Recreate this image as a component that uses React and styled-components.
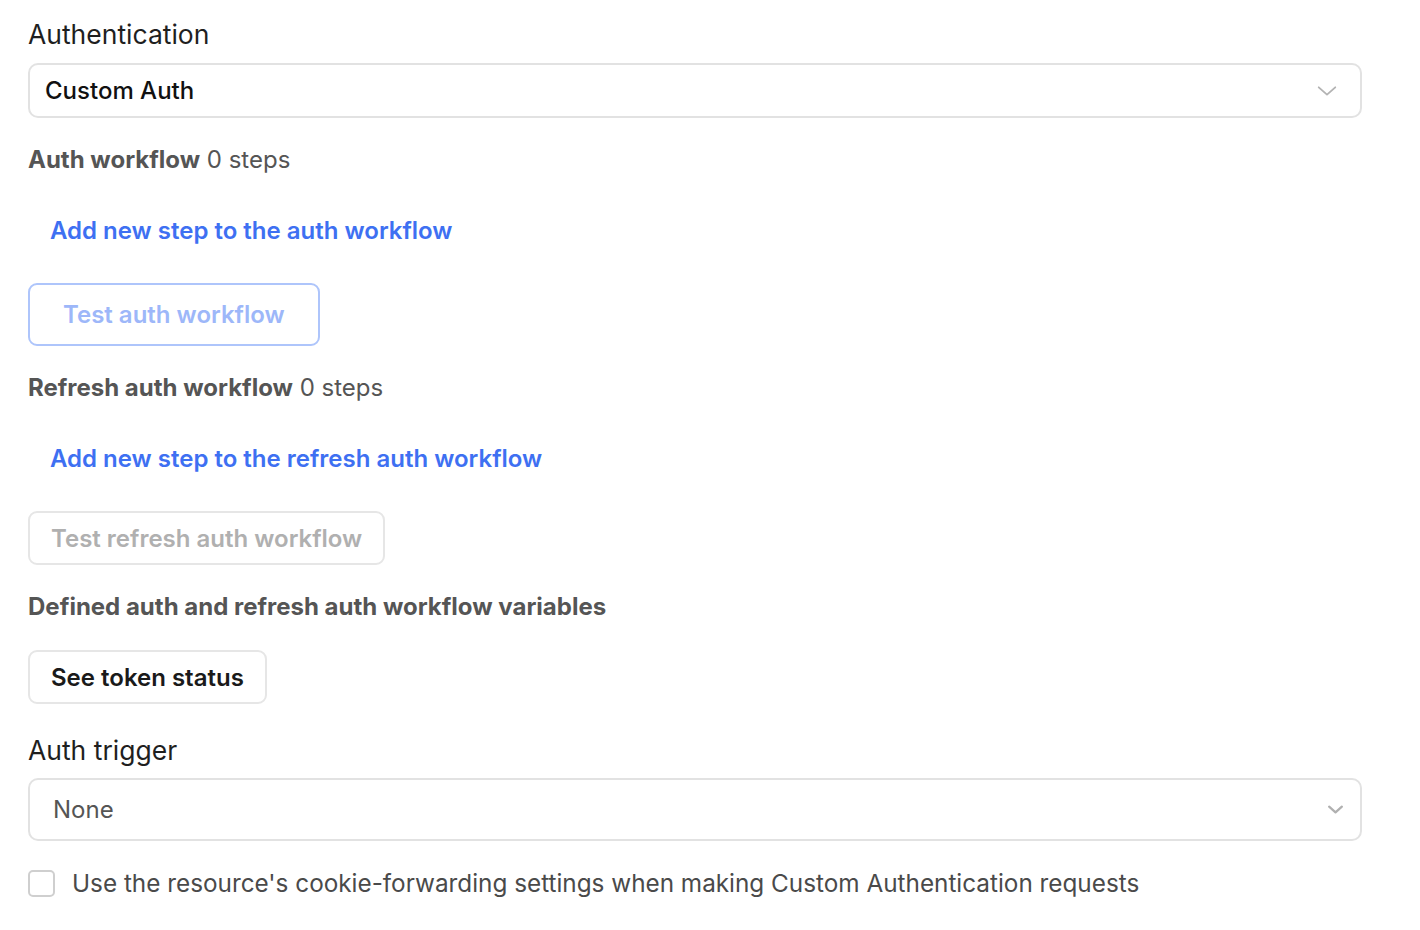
import { createGlobalStyle, styled } from "styled-components";

const GlobalStyle = createGlobalStyle`
  body {
    margin: 0;
    background: #ffffff;
    font-family: Inter, "Noto Sans", sans-serif;
    -webkit-font-smoothing: antialiased;
  }
`;

const Container = styled.div`
  display: flex;
  flex-direction: column;
  padding: 20px 58px 30px 28px;
`;

const Label = styled.div`
  font-size: 26.5px;
  line-height: 28px;
  color: #1f1f1f;
  margin-top: ${(p) => p.$top || 0}px;
  margin-bottom: ${(p) => p.$bottom || 15}px;
`;

const Select = styled.div`
  display: flex;
  align-items: center;
  justify-content: space-between;
  box-sizing: border-box;
  height: ${(p) => p.$height}px;
  border: 2px solid #e2e2e2;
  border-radius: 10px;
  padding: 0 ${(p) => p.$right}px 0 ${(p) => p.$pad}px;
  font-size: 24px;
  color: ${(p) => p.$color};
  font-weight: ${(p) => p.$weight};
`;

const SectionTitle = styled.div`
  font-size: 24px;
  line-height: 28px;
  color: #555555;
  margin-top: 28px;
  b {
    font-weight: 700;
  }
`;

const LinkButton = styled.button`
  align-self: flex-start;
  height: 54px;
  margin-top: 29px;
  padding: 0 22px;
  border: none;
  background: transparent;
  font-family: inherit;
  font-size: 24px;
  font-weight: 600;
  color: #3e70f2;
  cursor: pointer;
`;

const Button = styled.button`
  align-self: flex-start;
  box-sizing: border-box;
  height: ${(p) => p.$height || 54}px;
  margin-top: ${(p) => p.$top || 26}px;
  padding: 0 ${(p) => p.$pad || 21}px;
  border: 2px solid ${(p) => p.$border || "#e6e6e6"};
  border-radius: 9px;
  background: #ffffff;
  font-family: inherit;
  font-size: 24px;
  font-weight: 600;
  color: ${(p) => p.$color || "#1a1a1a"};
`;

const CheckRow = styled.label`
  display: flex;
  align-items: center;
  gap: 17px;
  margin-top: 27px;
  font-size: 24.3px;
  color: #4a4a4a;
`;

const Box = styled.span`
  box-sizing: border-box;
  width: 27px;
  height: 27px;
  border: 2px solid #cfcfcf;
  border-radius: 5px;
  flex-shrink: 0;
`;

const Chevron = ({ size, stroke, color }) => (
  <svg width={size} height={size} viewBox="0 0 24 24" fill="none">
    <path d="M3 8l9 8 9-8" stroke={color} strokeWidth={stroke} strokeLinecap="round" strokeLinejoin="round" />
  </svg>
);

const App = () => {
  return (
    <>
      <GlobalStyle />
      <Container>
        <Label>Authentication</Label>
        <Select $height={55} $pad={15} $right={22} $color="#111" $weight={500}>
          Custom Auth
          <Chevron size={22} stroke={2} color="#b3b3b3" />
        </Select>

        <SectionTitle>
          <b>Auth workflow</b> 0 steps
        </SectionTitle>
        <LinkButton>Add new step to the auth workflow</LinkButton>
        <Button $height={63} $pad={33} $border="#aec5fb" $color="#9db7f9">
          Test auth workflow
        </Button>

        <SectionTitle>
          <b>Refresh auth workflow</b> 0 steps
        </SectionTitle>
        <LinkButton>Add new step to the refresh auth workflow</LinkButton>
        <Button $color="#b0b0b0">Test refresh auth workflow</Button>

        <SectionTitle>
          <b>Defined auth and refresh auth workflow variables</b>
        </SectionTitle>
        <Button $top={29}>See token status</Button>

        <Label $top={32} $bottom={14}>Auth trigger</Label>
        <Select $height={63} $pad={23} $right={16} $color="#555" $weight={400}>
          None
          <Chevron size={17} stroke={3.2} color="#b0b0b0" />
        </Select>

        <CheckRow>
          <Box />
          Use the resource's cookie-forwarding settings when making Custom Authentication requests
        </CheckRow>
      </Container>
    </>
  );
};

export default App;
